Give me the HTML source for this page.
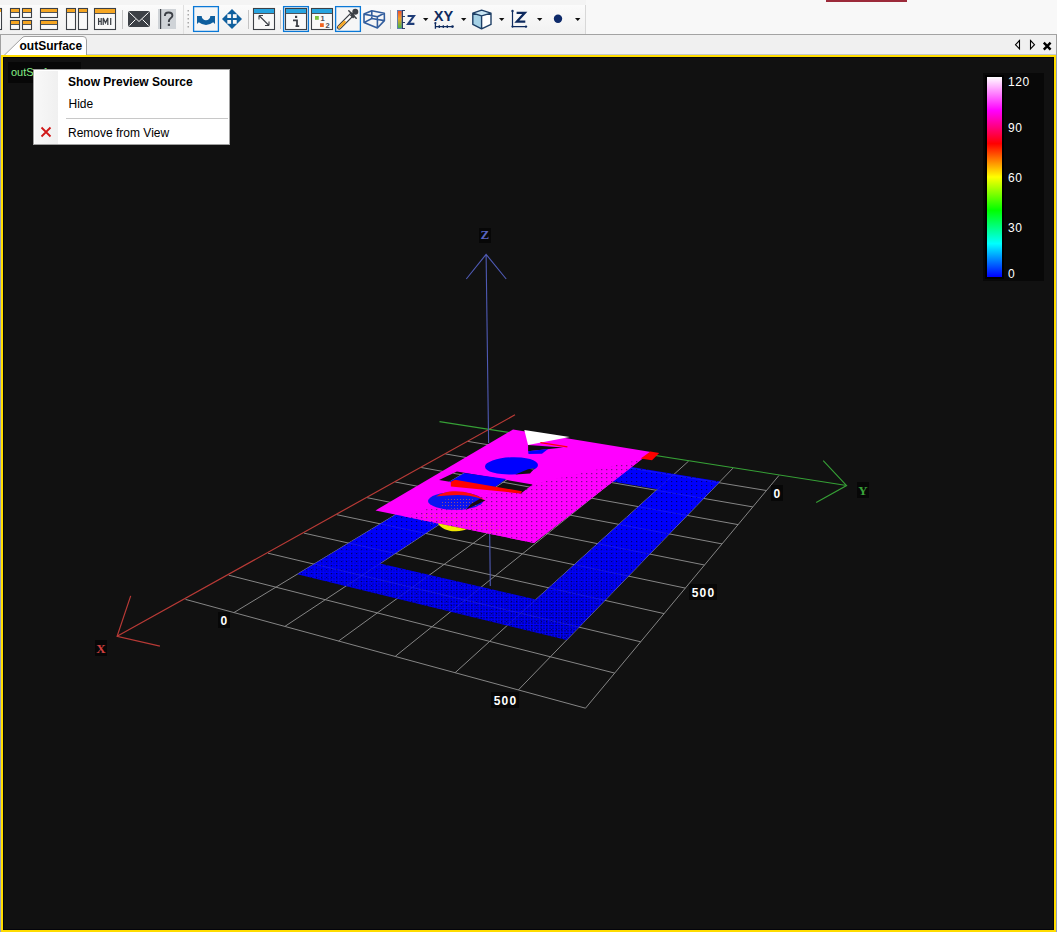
<!DOCTYPE html>
<html><head><meta charset="utf-8"><style>
*{margin:0;padding:0;box-sizing:border-box}
html,body{width:1057px;height:932px;overflow:hidden;background:#f8f8f8;font-family:"Liberation Sans",sans-serif}
.a{position:absolute}
.lb{background:#070707;text-align:center;line-height:18px;font-size:12px;font-weight:bold;color:#fff;letter-spacing:1.1px;text-indent:1px}
</style></head><body>
<div class="a" style="left:0;top:0;width:586px;height:5px;background:#f4f4f4"></div>
<div class="a" style="left:0;top:5px;width:184px;height:29px;background:linear-gradient(#fbfbfb,#f1f1f1);border-right:1px solid #e0e0e0"></div>
<div class="a" style="left:184px;top:5px;width:402px;height:29px;background:linear-gradient(#fbfbfb,#f1f1f1);border-right:1px solid #d8d8d8"></div>
<div class="a" style="left:826px;top:0;width:81px;height:1.5px;background:#9c2a3a"></div>
<svg class="a" style="left:0;top:0" width="1057" height="34" viewBox="0 0 1057 34"><rect x="-8.5" y="8.5" width="10" height="21" fill="#fff" stroke="#3c4046" stroke-width="1.1"/><rect x="-8" y="9" width="9" height="3" fill="#f5a623"/>
<rect x="10.5" y="8.5" width="9" height="9" fill="#f9f9f9" stroke="#3c4046" stroke-width="1.1"/>
<rect x="11" y="9" width="8" height="3" fill="#f5a623"/>
<rect x="11" y="12" width="8" height="0.9" fill="#3c4046"/>
<rect x="22.5" y="8.5" width="9" height="9" fill="#f9f9f9" stroke="#3c4046" stroke-width="1.1"/>
<rect x="23" y="9" width="8" height="3" fill="#f5a623"/>
<rect x="23" y="12" width="8" height="0.9" fill="#3c4046"/>
<rect x="10.5" y="20.5" width="9" height="9" fill="#f9f9f9" stroke="#3c4046" stroke-width="1.1"/>
<rect x="11" y="21" width="8" height="3" fill="#f5a623"/>
<rect x="11" y="24" width="8" height="0.9" fill="#3c4046"/>
<rect x="22.5" y="20.5" width="9" height="9" fill="#f9f9f9" stroke="#3c4046" stroke-width="1.1"/>
<rect x="23" y="21" width="8" height="3" fill="#f5a623"/>
<rect x="23" y="24" width="8" height="0.9" fill="#3c4046"/>
<rect x="40.5" y="8.5" width="17" height="9" fill="#f9f9f9" stroke="#3c4046" stroke-width="1.1"/>
<rect x="41" y="9" width="16" height="3" fill="#f5a623"/>
<rect x="41" y="12" width="16" height="0.9" fill="#3c4046"/>
<rect x="40.5" y="20.5" width="17" height="9" fill="#f9f9f9" stroke="#3c4046" stroke-width="1.1"/>
<rect x="41" y="21" width="16" height="3" fill="#f5a623"/>
<rect x="41" y="24" width="16" height="0.9" fill="#3c4046"/>
<rect x="66.5" y="8.5" width="9" height="21" fill="#f9f9f9" stroke="#3c4046" stroke-width="1.1"/>
<rect x="67" y="9" width="8" height="3" fill="#f5a623"/>
<rect x="67" y="12" width="8" height="0.9" fill="#3c4046"/>
<rect x="78.5" y="8.5" width="9" height="21" fill="#f9f9f9" stroke="#3c4046" stroke-width="1.1"/>
<rect x="79" y="9" width="8" height="3" fill="#f5a623"/>
<rect x="79" y="12" width="8" height="0.9" fill="#3c4046"/>
<rect x="94.5" y="8.5" width="21" height="21" fill="#f9f9f9" stroke="#3c4046" stroke-width="1.1"/>
<rect x="95" y="9" width="20" height="4" fill="#f5a623"/>
<rect x="95" y="13" width="20" height="0.9" fill="#3c4046"/>
<path d="M98.6,18 V25 M101.2,18 V25 M98.6,21.4 H101.2 M103.2,25 V18 L105.5,22.8 L107.8,18 V25 M110.7,18 V25" stroke="#3c4046" stroke-width="1.25" fill="none"/>
<rect x="122" y="10" width="1" height="19" fill="#c4c4c4"/>
<rect x="128" y="11" width="22" height="16" rx="2" fill="#3c4046"/>
<path d="M129.5,12.5 L139,21.5 L148.5,12.5 M129.5,25.5 L135.5,19.5 M148.5,25.5 L142.5,19.5" stroke="#fff" stroke-width="1" fill="none"/>
<rect x="158" y="9" width="18" height="20" fill="#cfd3d7"/><rect x="160" y="9" width="1.2" height="20" fill="#3c4046"/>
<path d="M164.9,15.9 C164.9,13.6 166.5,12.5 168.6,12.5 C170.8,12.5 172.4,13.8 172.4,15.7 C172.4,17.8 168.9,18.5 168.9,20.9 V21.9" stroke="#3c4046" stroke-width="1.9" fill="none"/><rect x="167.8" y="23.7" width="2.2" height="2.2" fill="#3c4046"/>
<rect x="187.5" y="10" width="1.5" height="1.5" fill="#a8a8a8"/>
<rect x="187.5" y="14" width="1.5" height="1.5" fill="#a8a8a8"/>
<rect x="187.5" y="18" width="1.5" height="1.5" fill="#a8a8a8"/>
<rect x="187.5" y="22" width="1.5" height="1.5" fill="#a8a8a8"/>
<rect x="187.5" y="26" width="1.5" height="1.5" fill="#a8a8a8"/>
<rect x="193.6" y="6.6" width="24.8" height="24.8" fill="#f6f6f6" stroke="#0a78d7" stroke-width="1.3"/>
<path d="M197,16 L201.7,16 A4.3,4.3 0 0 0 210.3,16 L215,16 L215,24 L213.2,22.3 Q206,27.8 198.8,22.3 L197,24 Z" fill="#0f5f9e"/>
<path d="M232,9 L242,19 L232,29 L222,19 Z" fill="#0f5f9e"/>
<rect x="227.3" y="14.2" width="3.8" height="3.8" fill="#f8f8f8"/>
<rect x="232.9" y="14.2" width="3.8" height="3.8" fill="#f8f8f8"/>
<rect x="227.3" y="20" width="3.8" height="3.8" fill="#f8f8f8"/>
<rect x="232.9" y="20" width="3.8" height="3.8" fill="#f8f8f8"/>
<rect x="248" y="10" width="1" height="19" fill="#c4c4c4"/>
<rect x="253.5" y="8.5" width="21" height="21" fill="#f9f9f9" stroke="#3c4046" stroke-width="1.1"/>
<rect x="254" y="9" width="20" height="4" fill="#27a4e0"/>
<rect x="254" y="13" width="20" height="0.9" fill="#3c4046"/>
<path d="M259,15.5 L269,25.5 M259,15.5 L259,19.5 M259,15.5 L263,15.5 M269,25.5 L269,21.5 M269,25.5 L265,25.5" stroke="#3c4046" stroke-width="1.1" fill="none"/>
<rect x="280" y="10" width="1" height="19" fill="#c4c4c4"/>
<rect x="283.6" y="6.6" width="24.8" height="24.8" fill="#f6f6f6" stroke="#0a78d7" stroke-width="1.3"/>
<rect x="285.5" y="8.5" width="21" height="21" fill="#f9f9f9" stroke="#3c4046" stroke-width="1.1"/>
<rect x="286" y="9" width="20" height="4" fill="#27a4e0"/>
<rect x="286" y="13" width="20" height="0.9" fill="#3c4046"/>
<path d="M293,20.3 H297 V26.3 M295.5,26.2 H299.2" stroke="#3c4046" stroke-width="1.8" fill="none"/><rect x="295" y="15.8" width="2.2" height="2.2" fill="#3c4046"/>
<rect x="311.5" y="8.5" width="21" height="21" fill="#f9f9f9" stroke="#3c4046" stroke-width="1.1"/>
<rect x="312" y="9" width="20" height="4" fill="#27a4e0"/>
<rect x="312" y="13" width="20" height="0.9" fill="#3c4046"/>
<rect x="315" y="16" width="3.8" height="3.8" fill="#7cc33f"/><rect x="320" y="23.2" width="3.8" height="3.8" fill="#f26522"/>
<text x="320.6" y="20.6" font-family="Liberation Sans" font-weight="bold" font-size="7.5" fill="#4a4e54">1</text><text x="325.5" y="27.6" font-family="Liberation Sans" font-weight="bold" font-size="7.5" fill="#4a4e54">2</text>
<rect x="335.6" y="6.6" width="24.8" height="24.8" fill="#f6f6f6" stroke="#0a78d7" stroke-width="1.3"/>
<path d="M339.2,27.3 L351.5,15" stroke="#3c4046" stroke-width="4.6" stroke-linecap="round"/><path d="M339.2,27.3 L351.5,15" stroke="#fff" stroke-width="2.4" stroke-linecap="round"/>
<path d="M339.3,27.2 L344.5,22" stroke="#f5a623" stroke-width="2.6" stroke-linecap="round"/>
<circle cx="355.3" cy="11.8" r="3" fill="#3c4046"/><path d="M351,14.2 L354.2,17.4" stroke="#3c4046" stroke-width="3.2"/><path d="M348.8,10.8 L356.2,18.2" stroke="#3c4046" stroke-width="1.5" stroke-linecap="round"/>
<path d="M364,14.1 L371.8,10.7 L384.3,13.2 L384.4,20.6 L377.4,28 L364,22.6 Z M364,14.1 L377.4,16.8 L384.3,13.2 M377.4,16.8 L377.4,28 M371.8,10.7 L371.8,18.5 L364,22.6 M371.8,18.5 L384.4,20.6" stroke="#335e9e" stroke-width="1.6" fill="none" stroke-linejoin="round"/>
<rect x="390" y="10" width="1" height="19" fill="#c4c4c4"/>
<defs><linearGradient id="cbi" x1="0" y1="0" x2="0" y2="1"><stop offset="0" stop-color="#f04a2a"/><stop offset="0.45" stop-color="#f2a32a"/><stop offset="1" stop-color="#3cb84a"/></linearGradient></defs>
<rect x="397.5" y="10.5" width="4.5" height="18" fill="url(#cbi)" stroke="#5a78b0" stroke-width="0.9"/>
<path d="M402,10.5 L405,10.5 M402,16.5 L405,16.5 M402,22.5 L405,22.5 M402,28.5 L405,28.5 M402.5,10.5 L402.5,28.5" stroke="#1a2e5a" stroke-width="0.9"/>
<path d="M407.6,16 H413.9 L408.1,23.9 H414.4" stroke="#1e3c78" stroke-width="2.1" fill="none" stroke-linejoin="miter"/>
<path d="M423,18 L428.4,18 L425.7,21 Z" fill="#111"/>
<path d="M461,18 L466.4,18 L463.7,21 Z" fill="#111"/>
<path d="M499,18 L504.4,18 L501.7,21 Z" fill="#111"/>
<path d="M537,18 L542.4,18 L539.7,21 Z" fill="#111"/>
<path d="M575,18 L580.4,18 L577.7,21 Z" fill="#111"/>
<text x="433.8" y="20.7" font-family="Liberation Sans" font-weight="bold" font-size="14" fill="#0e2a5e" textLength="19.5" lengthAdjust="spacingAndGlyphs">XY</text>
<path d="M435.4,23 L435.4,28.8 M435,26.6 L452.5,26.6 M439.3,25.2 L439.3,28 M443.3,25.2 L443.3,28 M447.3,25.2 L447.3,28" stroke="#0e2a5e" stroke-width="1.3"/><circle cx="435.4" cy="23" r="1.1" fill="#0e2a5e"/><circle cx="452.5" cy="26.6" r="1.3" fill="#0e2a5e"/>
<path d="M472.8,13.2 L481.6,15.9 L481.6,28.9 L472.8,24.4 Z" fill="#a6d2e6"/><path d="M472.8,13.2 L481.6,10.2 L491,13.2 L481.6,15.9 Z" fill="#cbe7f4"/><path d="M481.6,15.9 L491,13.2 L491,24.4 L481.6,28.9 Z" fill="#fff"/>
<path d="M481.6,10.2 L491,13.2 L491,24.4 L481.6,28.9 L472.8,24.4 L472.8,13.2 Z M472.8,13.2 L481.6,15.9 L491,13.2 M481.6,15.9 L481.6,28.9" stroke="#1e3f66" stroke-width="1.4" fill="none" stroke-linejoin="round"/>
<path d="M512.5,11 L512.5,26.6 L526,26.6" stroke="#0e2a5e" stroke-width="1.2" fill="none"/><circle cx="512.5" cy="11" r="1.2" fill="#0e2a5e"/><circle cx="512.5" cy="26.6" r="1.1" fill="#0e2a5e"/><circle cx="526" cy="26.6" r="1.2" fill="#0e2a5e"/>
<path d="M516.6,12.8 L524.8,12.8 L516.9,21.6 L525.3,21.6" stroke="#0e2a5e" stroke-width="2.3" fill="none" stroke-linejoin="miter"/>
<circle cx="558" cy="18.8" r="4.2" fill="#0e2a6a"/></svg>
<div class="a" style="left:0;top:34px;width:1057px;height:1px;background:#a3a3a3"></div>
<div class="a" style="left:0;top:35px;width:1057px;height:20px;background:#f0f0f0;border-left:1px solid #a0a0a0;border-right:1px solid #a0a0a0"></div>
<svg class="a" style="left:0;top:35px" width="100" height="20" viewBox="0 35 100 20">
<path d="M4,55.5 L23,37 Q24,36.5 25,36.5 L83,36.5 Q86.5,36.5 86.5,40 L86.5,55.5" fill="#fff" stroke="#a0a0a0" stroke-width="1"/>
</svg>
<div class="a" style="left:19.5px;top:38.8px;font-size:12px;font-weight:bold;color:#000;letter-spacing:0px">outSurface</div>
<svg class="a" style="left:1010px;top:38px" width="47" height="14" viewBox="1010 38 47 14">
<path d="M1019.5,40.5 L1015.5,44.7 L1019.5,48.8 Z" fill="none" stroke="#000" stroke-width="1.1"/>
<path d="M1030.5,40.5 L1034.5,44.7 L1030.5,48.8 Z" fill="none" stroke="#000" stroke-width="1.1"/>
<path d="M1043.8,42.6 L1050.6,49.6 M1050.6,42.6 L1043.8,49.6" stroke="#000" stroke-width="2.4"/>
</svg>
<div class="a" style="left:87px;top:54px;width:969px;height:1px;background:#c4c8d4"></div>
<div class="a" style="left:0;top:54px;width:1px;height:878px;background:#98a0b8"></div>
<div class="a" style="left:1056px;top:54px;width:1px;height:878px;background:#98a0b8"></div>
<div class="a" style="left:1px;top:55px;width:1055px;height:877px;background:#ffdc00"></div>
<div class="a" style="left:3px;top:57px;width:1051px;height:873px;background:#04040c"></div>
<div class="a" style="left:4px;top:58px;width:1049px;height:871px;background:#111111"></div>
<svg class="a" style="left:0;top:0" width="1057" height="932" viewBox="0 0 1057 932">
<g stroke="#858585" stroke-width="1"><line x1="467.8" y1="441.4" x2="766.4" y2="490.5"/>
<line x1="445.3" y1="453.9" x2="752.8" y2="506.9"/>
<line x1="421.2" y1="467.5" x2="738.1" y2="524.6"/>
<line x1="395.2" y1="482.0" x2="722.0" y2="543.9"/>
<line x1="367.2" y1="497.7" x2="704.5" y2="565.0"/>
<line x1="336.8" y1="514.7" x2="685.3" y2="588.1"/>
<line x1="303.9" y1="533.1" x2="664.1" y2="613.6"/>
<line x1="268.0" y1="553.2" x2="640.7" y2="641.8"/>
<line x1="228.7" y1="575.2" x2="614.7" y2="673.1"/>
<line x1="185.5" y1="599.4" x2="585.5" y2="708.2"/>
<line x1="526.1" y1="435.5" x2="233.9" y2="612.6"/>
<line x1="564.6" y1="441.6" x2="284.9" y2="626.4"/>
<line x1="604.5" y1="447.9" x2="338.6" y2="641.0"/>
<line x1="645.8" y1="454.4" x2="395.2" y2="656.4"/>
<line x1="688.6" y1="461.1" x2="455.1" y2="672.7"/>
<line x1="733.0" y1="468.1" x2="518.4" y2="689.9"/>
<line x1="779.0" y1="475.4" x2="585.5" y2="708.2"/></g>
<defs><clipPath id="bfc"><path d="M507.7,446.6 297.2,574.2 566.6,640.1 720.0,481.5 Z M526.6,466.7 379.9,563.6 535.9,599.5 657.6,489.2 Z" clip-rule="evenodd"/></clipPath><pattern id="bdots" patternUnits="userSpaceOnUse" width="5" height="4"><rect width="5" height="4" fill="#0000fc"/><rect x="1" y="1" width="1.2" height="1.1" fill="#000070"/></pattern><pattern id="bstr" patternUnits="userSpaceOnUse" width="3" height="2.6"><rect x="0" y="1.2" width="2.2" height="1" fill="#000030"/></pattern><linearGradient id="bgr" gradientUnits="userSpaceOnUse" x1="0" y1="520" x2="0" y2="640"><stop offset="0" stop-color="#fff" stop-opacity="0"/><stop offset="1" stop-color="#fff" stop-opacity="0.75"/></linearGradient><mask id="bmask" maskUnits="userSpaceOnUse" x="0" y="0" width="1057" height="932"><rect x="0" y="0" width="1057" height="932" fill="url(#bgr)"/></mask></defs><path d="M507.7,446.6 297.2,574.2 566.6,640.1 720.0,481.5 Z M526.6,466.7 379.9,563.6 535.9,599.5 657.6,489.2 Z" fill="url(#bdots)" fill-rule="evenodd"/><path d="M507.7,446.6 297.2,574.2 566.6,640.1 720.0,481.5 Z M526.6,466.7 379.9,563.6 535.9,599.5 657.6,489.2 Z" fill="url(#bstr)" fill-rule="evenodd" mask="url(#bmask)"/>
<g stroke="#9090e0" stroke-width="1" opacity="0.14" clip-path="url(#bfc)"><line x1="467.8" y1="441.4" x2="766.4" y2="490.5"/>
<line x1="445.3" y1="453.9" x2="752.8" y2="506.9"/>
<line x1="421.2" y1="467.5" x2="738.1" y2="524.6"/>
<line x1="395.2" y1="482.0" x2="722.0" y2="543.9"/>
<line x1="367.2" y1="497.7" x2="704.5" y2="565.0"/>
<line x1="336.8" y1="514.7" x2="685.3" y2="588.1"/>
<line x1="303.9" y1="533.1" x2="664.1" y2="613.6"/>
<line x1="268.0" y1="553.2" x2="640.7" y2="641.8"/>
<line x1="228.7" y1="575.2" x2="614.7" y2="673.1"/>
<line x1="185.5" y1="599.4" x2="585.5" y2="708.2"/>
<line x1="526.1" y1="435.5" x2="233.9" y2="612.6"/>
<line x1="564.6" y1="441.6" x2="284.9" y2="626.4"/>
<line x1="604.5" y1="447.9" x2="338.6" y2="641.0"/>
<line x1="645.8" y1="454.4" x2="395.2" y2="656.4"/>
<line x1="688.6" y1="461.1" x2="455.1" y2="672.7"/>
<line x1="733.0" y1="468.1" x2="518.4" y2="689.9"/>
<line x1="779.0" y1="475.4" x2="585.5" y2="708.2"/></g>
<path d="M515,414.8 L117.1,636.3 M130.7,595.9 L117.1,636.3 L159.9,646.2" stroke="#b83a36" stroke-width="1.2" fill="none"/>
<path d="M439.5,421.6 L846.6,485.5 M823.2,460.6 L846.6,485.5 L816.2,502.6" stroke="#36a036" stroke-width="1.1" fill="none"/>
<path d="M486.1,254.3 L488.6,443 M489.7,534 L490.3,586 M466.3,279 L486.1,254.3 L506.2,279" stroke="#4f5ab4" stroke-width="1.1" fill="none"/>
<defs><pattern id="mdots" patternUnits="userSpaceOnUse" width="5" height="4"><rect width="5" height="4" fill="#ff00ff"/><rect x="1" y="1" width="1.3" height="1.2" fill="#70107a"/></pattern><pattern id="odots" patternUnits="userSpaceOnUse" width="3" height="3"><rect x="1" y="1" width="1" height="1" fill="#ff8020"/></pattern><clipPath id="slotc"><path d="M439.1,480.1 L456.9,471.5 L532.5,484.4 L520.9,493.4 Z M528.1,445.1 L563.1,447.4 L528.1,451.2 Z M515.3,474.4 L528,469.2 L534.7,468.2 L530,473.5 Z"/></clipPath><clipPath id="mlow"><path d="M360,530 L440,505 L560,478 L660,455 L680,560 L360,560 Z"/></clipPath></defs>
<path d="M375.5,510.4 L513,429.5 L651,452 L534,543 Z" fill="#ff00ff"/>
<path d="M375.5,510.4 L513,429.5 L651,452 L534,543 Z" fill="url(#mdots)" clip-path="url(#mlow)" opacity="0.9"/>
<ellipse cx="511.5" cy="465.8" rx="26.5" ry="8.6" transform="rotate(-2 511.5 465.8)" fill="#0000ff"/>
<path d="M515.3,474.4 L528,469.2 L534.7,468.2 L530,473.5 Z" fill="#111"/>
<path d="M439.1,480.1 L456.9,471.5 L532.5,484.4 L520.9,493.4 Z" fill="#111111"/>
<g clip-path="url(#slotc)"><g stroke="#858585" stroke-width="1"><line x1="467.8" y1="441.4" x2="766.4" y2="490.5"/>
<line x1="445.3" y1="453.9" x2="752.8" y2="506.9"/>
<line x1="421.2" y1="467.5" x2="738.1" y2="524.6"/>
<line x1="395.2" y1="482.0" x2="722.0" y2="543.9"/>
<line x1="367.2" y1="497.7" x2="704.5" y2="565.0"/>
<line x1="336.8" y1="514.7" x2="685.3" y2="588.1"/>
<line x1="303.9" y1="533.1" x2="664.1" y2="613.6"/>
<line x1="268.0" y1="553.2" x2="640.7" y2="641.8"/>
<line x1="228.7" y1="575.2" x2="614.7" y2="673.1"/>
<line x1="185.5" y1="599.4" x2="585.5" y2="708.2"/>
<line x1="526.1" y1="435.5" x2="233.9" y2="612.6"/>
<line x1="564.6" y1="441.6" x2="284.9" y2="626.4"/>
<line x1="604.5" y1="447.9" x2="338.6" y2="641.0"/>
<line x1="645.8" y1="454.4" x2="395.2" y2="656.4"/>
<line x1="688.6" y1="461.1" x2="455.1" y2="672.7"/>
<line x1="733.0" y1="468.1" x2="518.4" y2="689.9"/>
<line x1="779.0" y1="475.4" x2="585.5" y2="708.2"/></g></g>
<path d="M449,482 L464.3,473 L506.1,478.9 L495,486.9 Z" fill="#0000ff"/>
<path d="M450.8,481.7 L455,479.7 L522,491.2 L520.9,493.4 L450.8,486.5 Z" fill="#ff0000"/>
<path d="M524.3,429.9 L569.7,437 L528.1,445.1 Z" fill="#ffffff"/>
<path d="M528.1,445.1 L563.1,447.4 L528.1,451.2 Z" fill="#111111"/>
<path d="M528.1,451.2 L563.1,447.4" stroke="none"/>
<path d="M540.4,442.6 L567.4,446.8" stroke="#ff0000" stroke-width="1.3"/>
<path d="M528.1,451.2 L548,449 L542,453.8 L528.5,454 Z" fill="#0000ff"/>
<path d="M640.7,458.6 L650.4,451.4 L659.2,453 L652,460.2 Z" fill="#ff0000"/>
<ellipse cx="455.5" cy="501" rx="27.5" ry="8.8" fill="#0a14f0"/>
<ellipse cx="460" cy="503.5" rx="20" ry="5.5" fill="url(#odots)" opacity="0.55"/>
<path d="M436,496.5 C445,489.5 468,488 485.6,500.6 C479,497.5 470,495.2 458,495 C450,495 443,496 436,496.5 Z" fill="#ff0a0a"/>
<path d="M466,509.5 L485.5,500.5 L480,498.8 L471,504 Z" fill="#1a0a10"/>
<path d="M437.5,523.2 C441,528.5 449,531.8 456,531.3 C461,531 464,530.2 466.5,529.3 Z" fill="#f0e800"/>
<path d="M425,512 L500,524 L505,536 L420,522 Z" fill="url(#odots)" clip-path="url(#mlow)" opacity="0.35"/>
</svg>
<div class="a" style="left:983px;top:73px;width:61px;height:208px;background:#080808"></div>
<div class="a" style="left:985px;top:75px;width:19px;height:204px;background:#000"></div>
<div class="a" style="left:987px;top:77px;width:15px;height:200px;background:linear-gradient(#ffffff 0%,#ff00ff 16.67%,#ff0000 33.33%,#ffff00 50%,#00ff00 66.67%,#00ffff 83.33%,#0000ff 100%)"></div>
<div class="a" style="left:1008px;top:75px;font-size:12px;letter-spacing:0.6px;color:#fff">120</div>
<div class="a" style="left:1008px;top:121px;font-size:12px;letter-spacing:0.6px;color:#fff">90</div>
<div class="a" style="left:1008px;top:171px;font-size:12px;letter-spacing:0.6px;color:#fff">60</div>
<div class="a" style="left:1008px;top:221px;font-size:12px;letter-spacing:0.6px;color:#fff">30</div>
<div class="a" style="left:1008px;top:267px;font-size:12px;letter-spacing:0.6px;color:#fff">0</div>
<div class="a lb" style="left:95px;top:640px;width:12px;height:16px"><span style="color:#d04040;font-family:'Liberation Serif';font-weight:bold;font-size:13px;position:relative;top:-0.5px">X</span></div>
<div class="a lb" style="left:857px;top:482px;width:12px;height:16px"><span style="color:#3aa23a;font-family:'Liberation Serif';font-weight:bold;font-size:13px;position:relative;top:0px">Y</span></div>
<div class="a lb" style="left:479px;top:228px;width:12px;height:15px"><span style="color:#5a64c0;font-family:'Liberation Serif';font-weight:bold;font-size:13px;position:relative;top:-2px">Z</span></div>
<div class="a lb" style="left:218px;top:612px;width:12px;height:16px"><span>0</span></div>
<div class="a lb" style="left:771px;top:485px;width:12px;height:16px"><span>0</span></div>
<div class="a lb" style="left:491px;top:692px;width:28px;height:16px"><span>500</span></div>
<div class="a lb" style="left:689px;top:584px;width:28px;height:16px"><span>500</span></div>
<div class="a" style="left:8px;top:62px;width:73px;height:21px;background:#070707"></div>
<div class="a" style="left:11px;top:66px;font-size:11px;color:#86ee86">outSurface</div>
<div class="a" style="left:33px;top:69px;width:197px;height:76px;background:#fff;border:1px solid #a0a0a0"></div>
<div class="a" style="left:35px;top:71px;width:23px;height:73px;background:linear-gradient(90deg,#f8f8f8,#f0f0f0)"></div>
<div class="a" style="left:66px;top:118px;width:162px;height:1px;background:#c8c8c8"></div>
<div class="a" style="left:68px;top:75px;font-size:12px;font-weight:bold;color:#000">Show Preview Source</div>
<div class="a" style="left:68.5px;top:97px;font-size:12px;color:#000">Hide</div>
<div class="a" style="left:68px;top:125.5px;font-size:12px;color:#000">Remove from View</div>
<svg class="a" style="left:40px;top:126px" width="12" height="12" viewBox="0 0 12 12"><path d="M1.5,1.5 L10.5,10.5 M10.5,1.5 L1.5,10.5" stroke="#d01818" stroke-width="1.8"/></svg>
</body></html>
